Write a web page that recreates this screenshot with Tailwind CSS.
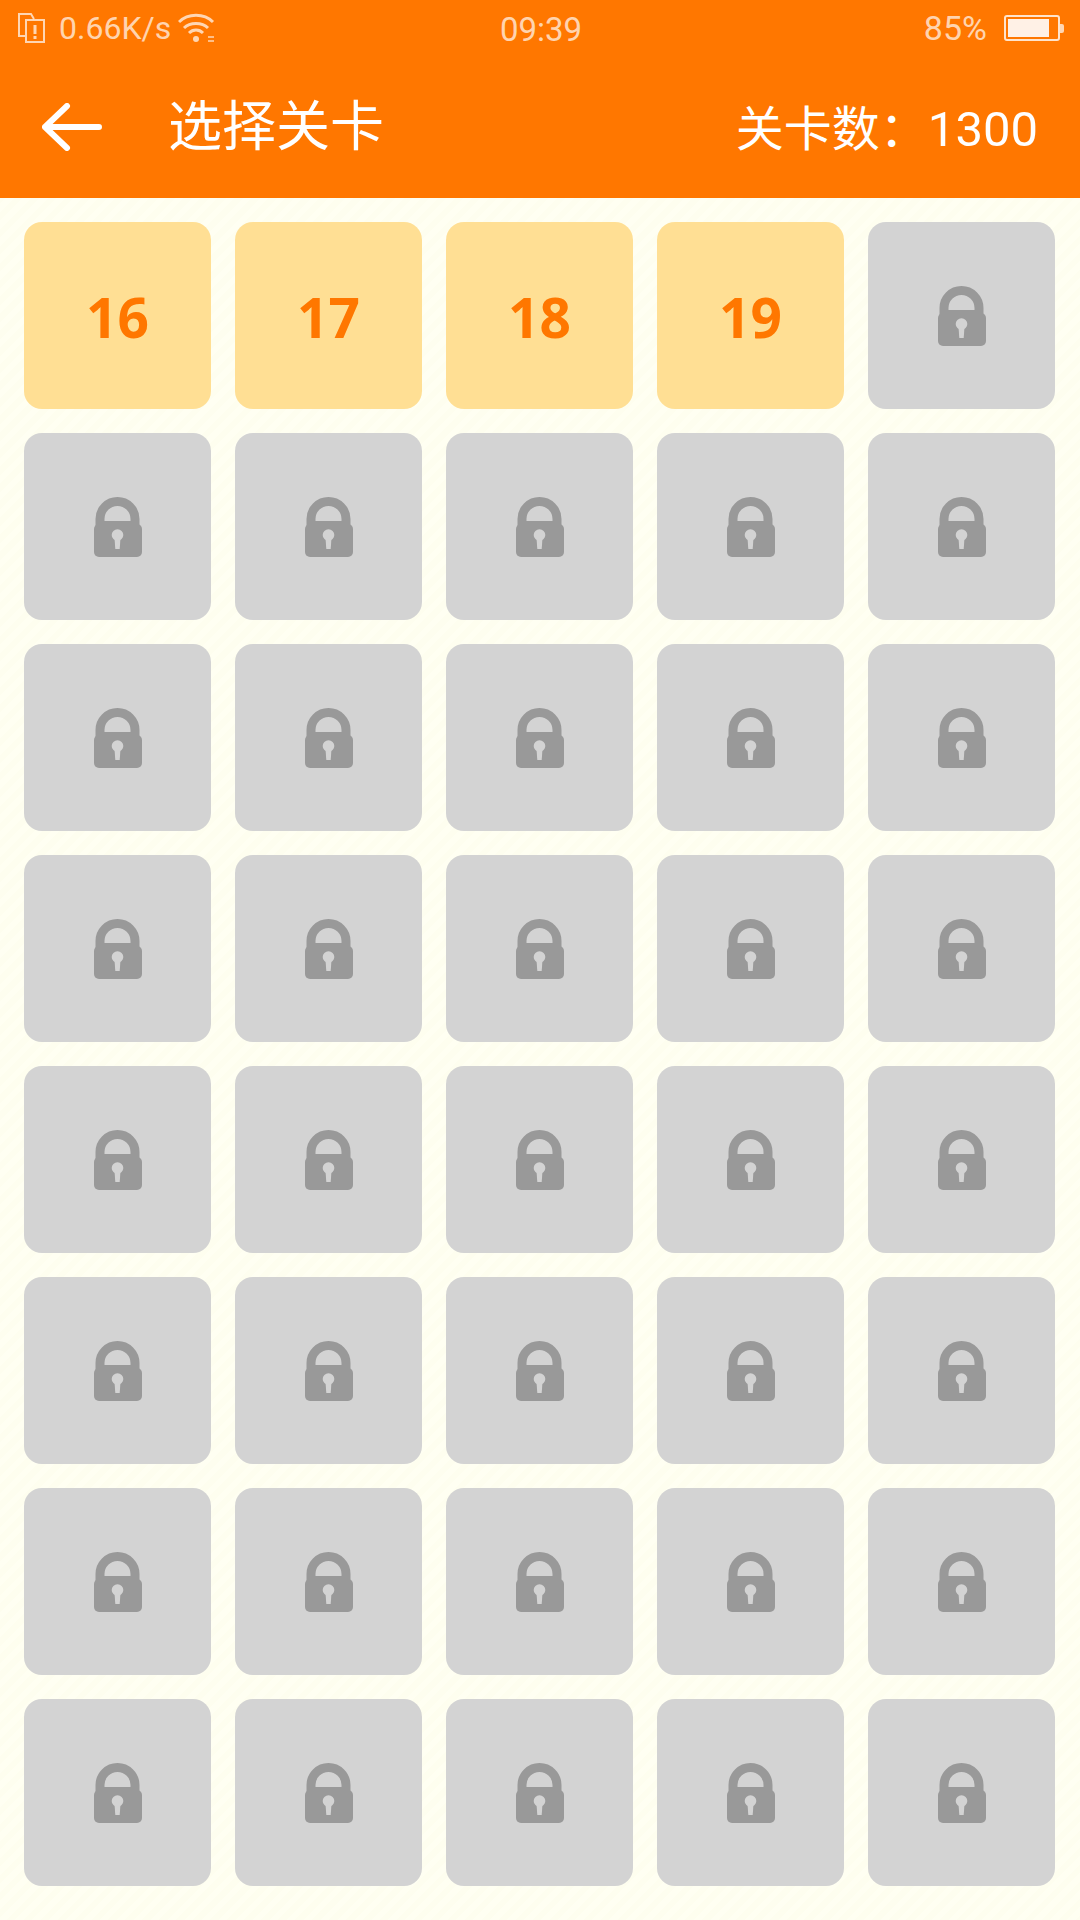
<!DOCTYPE html>
<html lang="zh-CN">
<head>
    <meta charset="UTF-8">
    <meta name="viewport" content="width=device-width, initial-scale=1.0">
    <title>选择关卡</title>
    <script src="https://cdn.jsdelivr.net/npm/@tailwindcss/browser@4"></script>
</head>
<body class="bg-[#fffff2] font-['Roboto','Noto_Sans_CJK_SC',sans-serif]">
    <div class="w-[1080px] h-[1920px] overflow-hidden bg-[repeating-linear-gradient(135deg,#fffff2_0px,#fffff2_6px,#fefeef_6px,#fefeef_12px)]">
        <!-- Status bar + toolbar -->
        <header class="bg-[#ff7700] h-[198px] text-white">
            <div class="h-[56px] grid grid-cols-3 items-center pl-[18px] pr-[16px] text-white/70 font-normal">
                <div class="flex items-center text-[32px]">
                    <svg class="w-[27px] h-[30px]" viewBox="0 0 27 30" fill="none" stroke="currentColor" stroke-width="2">
                        <path d="M7 23H1V1h12l3 5"/>
                        <path d="M8 7h18v22H8z"/>
                        <path d="M17 12v9M17 23v3" stroke-width="3"/>
                    </svg>
                    <span class="ml-[14px]">0.66K/s</span>
                    <svg class="w-[38px] h-[30px] ml-[7px]" viewBox="0 0 38 30" fill="none" stroke="currentColor" stroke-width="3">
                        <path d="M1 9C10 0 26 0 35 9"/>
                        <path d="M6 15C12 9 24 9 30 15"/>
                        <path d="M11 20C15 16 21 16 25 20"/>
                        <circle cx="18" cy="26" r="3" fill="currentColor" stroke="none"/>
                        <path d="M30 24h6M30 28h6" stroke-width="1.6"/>
                    </svg>
                </div>
                <div class="text-center text-[33px] pt-[3px]">09:39</div>
                <div class="flex items-center justify-end text-[34px]">
                    <span>85%</span>
                    <div class="ml-[17px] w-[56px] h-[26px] border-2 border-white/80 rounded-[3px] py-[2px] pl-[2px]">
                        <div class="w-[41px] h-full bg-[#fff1e6]"></div>
                    </div>
                    <div class="w-[4px] h-[9px] bg-white/70 rounded-r-[2px]"></div>
                </div>
            </div>
            <div class="h-[142px] flex items-center">
                <svg class="w-[60px] h-[48px] ml-[42px]" viewBox="0 0 60 48" fill="none" stroke="#ffffff" stroke-width="6" stroke-linecap="round" stroke-linejoin="round">
                    <path d="M25 3L3 24l22 21M3 24h54"/>
                </svg>
                <h1 class="ml-[66px] pt-[2px] text-[54px] font-normal leading-none">选择关卡</h1>
                <div class="ml-auto mr-[42px] pt-[4px] text-[48px] font-normal leading-none">关卡数：<span class="text-[49px]">1300</span></div>
            </div>
        </header>

        <!-- Level grid, filled in below -->
        <main id="levels" class="grid grid-cols-[repeat(5,187px)] gap-[24px] pl-[24px] pt-[24px]"></main>
    </div>

    <script>
        const lockIcon = `
            <svg class="w-[48px] h-[60px]" viewBox="0 0 48 60">
                <path d="M6 30V22a17.5 17.5 0 0 1 35 0V30" fill="none" stroke="#999999" stroke-width="9"/>
                <rect x="6" y="24" width="35" height="5" fill="#999999"/>
                <rect y="27" width="48" height="33" rx="5" fill="#999999"/>
                <circle cx="23.5" cy="38" r="5.8" fill="#d3d3d3"/>
                <path d="M20.5 41h6l-.8 11h-4.4z" fill="#d3d3d3"/>
            </svg>`;

        const openLevels = [16, 17, 18, 19];
        const levels = document.getElementById("levels");
        for (let i = 0; i < 40; i++) {
            if (i < openLevels.length) {
                levels.innerHTML += `<div class="h-[187px] rounded-[18px] bg-[#ffdf94] flex items-center justify-center pt-[4px] text-[#ff7700] text-[55px] font-bold font-['Noto_Sans',sans-serif]">${openLevels[i]}</div>`;
            } else {
                levels.innerHTML += `<div class="h-[187px] rounded-[18px] bg-[#d3d3d3] flex items-center justify-center">${lockIcon}</div>`;
            }
        }
    </script>
</body>
</html>
